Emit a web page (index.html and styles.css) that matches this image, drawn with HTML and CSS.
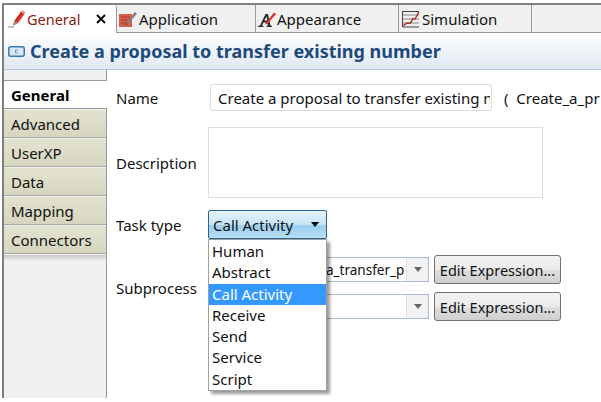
FILE: index.html
```html
<!DOCTYPE html>
<html lang="en">
<head>
    <meta charset="UTF-8">
    <title>Create a proposal to transfer existing number</title>
    <link rel="stylesheet" href="styles.css">
</head>
<body>
    <div class="frame">
        <div class="tabs">
            <div class="tab active">
                <svg class="tab-icon" viewBox="0 0 18 18"><path d="M0 17h6" stroke="#8a8a8a" fill="none"/><path d="M5 15.500l1.500-5L13 1.500l3.500 2.500-6.500 9z" fill="#e0352b"/><path d="M13 1.500l3.500 2.500 1-1.500L14.500 0z" fill="#e89a8c"/><path d="M5 15.500l1.500-5 3.500 2.500z" fill="#a98570"/><path d="M7.500 11l6-8" stroke="#a81c14"/></svg>
                <span>General</span>
                <svg class="close" viewBox="0 0 10 10"><path d="M1 1l8 8M9 1l-8 8" stroke="#000" stroke-width="1.800"/></svg>
            </div>
            <div class="tab app">
                <svg class="tab-icon" viewBox="0 0 18 18"><rect x="0" y="4" width="13" height="13" fill="#d0604c"/><path d="M2 7h9M2 10h9M2 13h7" stroke="#b83c2c"/><path d="M7 13l9-11 2 1.500-9 11z" fill="#8c7c7c"/><path d="M6 15l1-2 2 1.500z" fill="#a02818"/></svg>
                <span>Application</span>
            </div>
            <div class="tab look">
                <svg class="tab-icon" viewBox="0 0 18 18"><path d="M0 17v-1l2-.5L7.500 4h2.500l2.500 11.500 1.500.5v1H8.500v-1l1.500-.5-.5-3H5.500l-1.500 3 1.500.5v1zM6.300 10.500h3L8.500 6.500z" fill="#2c2c2c"/><path d="M7 14l9-11.500 2 1.500-9 10.500z" fill="#d8342a"/></svg>
                <span>Appearance</span>
            </div>
            <div class="tab sim">
                <svg class="tab-icon" viewBox="0 0 18 18"><path d="M.5 1v16H17" fill="none" stroke="#444"/><path d="M0 1.500h17" stroke="#444"/><path d="M1 5h16M1 9h16M1 13h16" stroke="#aaa" stroke-width="1.500"/><path d="M1 16l4-3 3 .5 3-5 2 .5 4-7" stroke="#a8342a" fill="none" stroke-width="1.500"/></svg>
                <span>Simulation</span>
            </div>
            <div class="tab-rest"></div>
        </div>

        <div class="title-bar">
            <svg class="title-icon" viewBox="0 0 17 11"><rect x="0.750" y="0.750" width="15.500" height="9.500" rx="2" fill="#dbe6f2" stroke="#3a78ad" stroke-width="1.500"/><path d="M10 4H7.500v3H10" fill="none" stroke="#7d96ad"/></svg>
            <h1>Create a proposal to transfer existing number</h1>
        </div>

        <div class="content">
            <div class="sidebar">
                <div class="side-top"></div>
                <div class="side-item selected">General</div>
                <div class="side-item">Advanced</div>
                <div class="side-item">UserXP</div>
                <div class="side-item">Data</div>
                <div class="side-item">Mapping</div>
                <div class="side-item">Connectors</div>
                <div class="side-fill"></div>
            </div>

            <div class="form">
                <div class="row row-name">
                    <label>Name</label>
                    <input class="text-input" type="text" value="Create a proposal to transfer existing number">
                    <span class="tech-name">(&nbsp; Create_a_pr</span>
                </div>
                <div class="row row-desc">
                    <label>Description</label>
                    <div class="text-area"></div>
                </div>
                <div class="row row-type">
                    <label>Task type</label>
                    <div class="select-wrap">
                        <div class="select-btn"><span>Call Activity</span><i class="arrow"></i></div>
                        <ul class="menu">
                            <li>Human</li>
                            <li>Abstract</li>
                            <li class="current">Call Activity</li>
                            <li>Receive</li>
                            <li>Send</li>
                            <li>Service</li>
                            <li>Script</li>
                        </ul>
                    </div>
                </div>
                <div class="sub-block">
                    <label>Subprocess</label>
                    <div class="sub-rows">
                        <div class="sub-row">
                            <div class="combo"><span class="combo-text">a_transfer_p</span><b class="combo-btn"><i></i></b></div>
                            <button class="expr">Edit Expression...</button>
                        </div>
                        <div class="sub-row">
                            <div class="combo"><span class="combo-text"></span><b class="combo-btn"><i></i></b></div>
                            <button class="expr">Edit Expression...</button>
                        </div>
                    </div>
                </div>
            </div>
        </div>
    </div>
</body>
</html>
```

FILE: styles.css
```css
html, body {
    margin: 0;
    height: 402px;
    overflow: hidden;
    background-color: #fff;
}

body {
    font-family: "Noto Sans", "Open Sans", sans-serif;
    font-size: 15px;
    color: #111;
}

.frame {
    box-sizing: border-box;
    margin: 3px 0 0 2px;
    height: 395px;
    border-top: 2px solid #808080;
    border-left: 2px solid #808080;
    display: flex;
    flex-direction: column;
}

/* top tabs */
.tabs {
    display: flex;
    height: 28px;
    flex-shrink: 0;
    overflow: hidden;
}

.tab {
    display: flex;
    align-items: center;
    gap: 2px;
    box-sizing: border-box;
    background-color: #f0f0f0;
    border-right: 1px solid #999;
    border-bottom: 1px solid #999;
    padding-left: 2px;
}

.tab.active {
    width: 113px;
    gap: 1px;
    background-color: #fff;
    border-bottom: none;
    padding-left: 4px;
    font-size: 14.500px;
    color: #8c1c10;
    border-top-right-radius: 3px;
}

.tab.app { width: 139px; }
.tab.look { width: 143px; gap: 1px; }
.tab.sim { width: 133px; padding-left: 3px; }

.tab-rest {
    flex: 1;
    background-color: #f0f0f0;
    border-bottom: 1px solid #999;
}

.tab-icon {
    width: 18px;
    height: 18px;
    flex-shrink: 0;
}

.close {
    width: 10px;
    height: 10px;
    margin-left: 15px;
}

/* form heading */
.title-bar {
    display: flex;
    align-items: center;
    gap: 5px;
    height: 37px;
    flex-shrink: 0;
    box-sizing: border-box;
    padding-left: 4px;
    background: linear-gradient(#fff, #dfe7f2);
    border-bottom: 1px solid #b4c6e0;
}

.title-icon {
    width: 17px;
    height: 11px;
}

h1 {
    margin: 0;
    font-size: 18px;
    font-weight: 700;
    color: #1c4a7a;
}

.content {
    flex: 1;
    display: flex;
}

/* left tabs */
.sidebar {
    width: 103px;
    flex-shrink: 0;
    box-sizing: border-box;
    border-right: 1px solid #999;
    background-color: #f0f0f0;
    display: flex;
    flex-direction: column;
}

.side-top {
    height: 11px;
    box-sizing: border-box;
    border-bottom: 1px solid #999;
}

.side-item {
    height: 28px;
    line-height: 29px;
    box-sizing: border-box;
    padding-left: 7px;
    margin-bottom: 1px;
    background: linear-gradient(#e2e2d0, #d6d6c0);
    border-bottom: 1px solid #a8a8a0;
}

.side-item.selected {
    margin-right: -1px;
    background: #fff;
    font-weight: 700;
    color: #000;
    border-bottom: 1px solid #999;
}

.side-fill {
    height: 6px;
    background: linear-gradient(#c8c8c8, #f0f0f0);
}

/* form */
.form {
    flex: 1;
    min-width: 0;
    padding: 14px 0 0 9px;
    display: flex;
    flex-direction: column;
}

label {
    width: 92px;
    flex-shrink: 0;
    overflow: hidden;
    white-space: nowrap;
}

.row {
    display: flex;
    align-items: center;
}

.row-name {
    height: 27px;
    white-space: nowrap;
}

.row-name label {
    width: 94px;
}

.text-input {
    box-sizing: border-box;
    width: 282px;
    height: 27px;
    flex-shrink: 0;
    margin-right: 12px;
    padding: 0 1px 0 7px;
    border: 1px solid #d8dfe8;
    border-radius: 2px;
    font-family: inherit;
    font-size: 15px;
    color: #111;
    outline: none;
}

.tech-name {
    flex-shrink: 0;
}

.row-desc {
    margin-top: 16px;
}

.text-area {
    box-sizing: border-box;
    width: 335px;
    height: 71px;
    border: 1px solid #dcdcdc;
    background-color: #fff;
}

.row-type {
    margin-top: 12px;
}

.select-wrap {
    position: relative;
}

.select-btn {
    box-sizing: border-box;
    width: 119px;
    height: 29px;
    display: flex;
    align-items: center;
    justify-content: space-between;
    padding: 0 7px 0 4px;
    border: 1px solid #2c628b;
    border-radius: 2px;
    background: linear-gradient(#e6f3fa 0%, #c4e4f6 50%, #98cfee 55%, #b8def3 100%);
}

.arrow {
    width: 0;
    height: 0;
    border-left: 4px solid transparent;
    border-right: 4px solid transparent;
    border-top: 5px solid #000;
}

.menu {
    position: absolute;
    z-index: 2;
    top: 29px;
    left: 0;
    box-sizing: border-box;
    width: 119px;
    margin: 0;
    padding: 1px 0 0;
    list-style: none;
    background-color: #fff;
    border: 1px solid #a0a0a0;
    box-shadow: 3px 3px 3px rgba(0, 0, 0, 0.4);
}

.menu li {
    height: 21.300px;
    line-height: 21px;
    padding-left: 3px;
}

.menu li.current {
    background-color: #3399ff;
    color: #fff;
}

.sub-block {
    display: flex;
    align-items: center;
    margin-top: 16px;
}

.sub-rows {
    display: flex;
    flex-direction: column;
    gap: 8px;
}

.sub-row {
    display: flex;
    align-items: center;
    gap: 5px;
}

.combo {
    box-sizing: border-box;
    width: 221px;
    height: 25px;
    display: flex;
    align-items: center;
    border: 1px solid #abbccf;
    white-space: nowrap;
    overflow: hidden;
}

.combo-text {
    flex: 1;
    min-width: 0;
    padding-left: 117px;
    font-size: 13.500px;
}

.combo-btn {
    width: 21px;
    height: 100%;
    flex-shrink: 0;
    display: flex;
    align-items: center;
    justify-content: center;
    background-color: #f2f2f2;
    border-left: 1px solid #e0e0e0;
}

.combo-btn i {
    width: 0;
    height: 0;
    border-left: 4px solid transparent;
    border-right: 4px solid transparent;
    border-top: 5px solid #666;
}

.expr {
    box-sizing: border-box;
    width: 127px;
    height: 29px;
    padding: 0;
    font-family: inherit;
    font-size: 14.500px;
    color: #111;
    border: 1px solid #707070;
    border-radius: 3px;
    background: linear-gradient(#f2f2f2 0%, #ebebeb 50%, #dddddd 55%, #cfcfcf 100%);
}
```
